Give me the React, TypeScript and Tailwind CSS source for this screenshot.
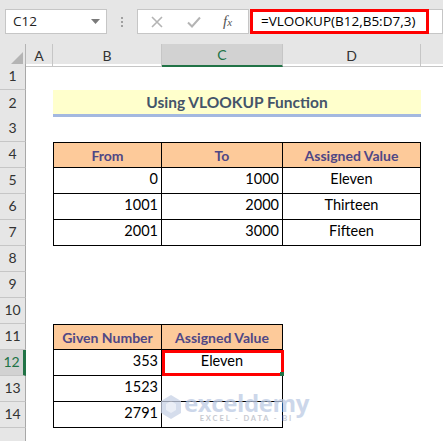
import React from "react";

const cols = "grid grid-cols-[26px_27px_109px_121px_138px_1fr]";
const font = "font-['Lato','Open_Sans',sans-serif]";

function RowHead({ n, selected }: { n?: number; selected?: boolean }) {
  return (
    <div
      className={
        selected
          ? "flex items-end justify-center pb-[3px] bg-[#d2d2d2] text-[#217346] border-b border-[#c6c6c6] border-r-[3px] border-r-[#217346] text-[14px]"
          : "flex items-end justify-center pb-[3px] bg-[#e6e6e6] text-[#333] border-b border-[#c6c6c6] border-r border-r-[#a8a8a8] text-[14px]"
      }
    >
      {n}
    </div>
  );
}

function Row({
  n,
  selected,
  children,
}: {
  n?: number;
  selected?: boolean;
  children?: React.ReactNode;
}) {
  return (
    <div className={`${cols} h-[26px]`}>
      <RowHead n={n} selected={selected} />
      {children}
    </div>
  );
}

const head =
  "flex items-center justify-center pt-[1px] bg-[#fdca9a] font-bold text-[#4f4785] text-[14px] border-t border-b border-r border-black";
const num =
  "flex items-end justify-end pr-[3px] pb-[3px] text-[14.5px] text-black border-b border-r border-black";
const txt =
  "flex items-end justify-center pb-[3px] text-[14.5px] text-black border-b border-r border-black";

const rates = [
  { from: 0, to: 1000, value: "Eleven" },
  { from: 1001, to: 2000, value: "Thirteen" },
  { from: 2001, to: 3000, value: "Fifteen" },
];

const given = [
  { n: 353, value: "Eleven" },
  { n: 1523, value: "" },
  { n: 2791, value: "" },
];

export default function App() {
  return (
    <div className={`w-[443px] h-[441px] overflow-hidden bg-white ${font}`}>
      {/* Formula bar */}
      <div className="h-[44px] bg-[#e6e6e6] flex items-start pt-[9px] pl-[5px]">
        <div className="w-[102px] h-[25px] bg-white border border-[#c6c6c6] flex items-center justify-between pl-[7px] pr-[6px] font-['Open_Sans',sans-serif] text-[13.5px] text-[#222]">
          <span>C12</span>
          <svg width="9" height="5" viewBox="0 0 9 5">
            <path d="M0 0h9L4.5 5z" fill="#7a7a7a" />
          </svg>
        </div>
        <div className="w-[30px] h-[25px] flex flex-col items-center justify-center gap-[2px]">
          <span className="w-[2px] h-[2px] bg-[#a0a0a0]" />
          <span className="w-[2px] h-[2px] bg-[#a0a0a0]" />
          <span className="w-[2px] h-[2px] bg-[#a0a0a0]" />
        </div>
        <div className="w-[112px] h-[25px] bg-white border border-[#c6c6c6] flex items-center">
          <svg className="ml-[13px]" width="12" height="12" viewBox="0 0 12 12">
            <path d="M1 1l10 10M11 1L1 11" stroke="#b4b4b4" strokeWidth="1.6" />
          </svg>
          <svg className="ml-[24px]" width="14" height="12" viewBox="0 0 14 12">
            <path d="M1 6.5l4 4L13 1.5" stroke="#b4b4b4" strokeWidth="2" fill="none" />
          </svg>
          <span className="ml-[22px] italic font-['Liberation_Serif',serif] text-[15px] text-[#555]">
            f<span className="text-[11px]">x</span>
          </span>
        </div>
        <div className="ml-[1px] flex-1 h-[25px] bg-white border border-[#c6c6c6]">
          <div className="w-[179px] h-[25px] -mt-px -ml-px border-[3px] border-[#ff0000] flex items-center pl-[8px] font-['Open_Sans',sans-serif] text-[13.5px] text-black">
            =VLOOKUP(B12,B5:D7,3)
          </div>
        </div>
      </div>

      {/* Column headers */}
      <div className={`${cols} h-[20px] bg-[#e6e6e6] text-[14px] text-[#333]`}>
        <div className="border-r border-b border-[#b4b4b4] flex items-end justify-end p-[2px]">
          <svg width="12" height="12" viewBox="0 0 12 12">
            <path d="M12 0v12H0z" fill="#b4b4b4" />
          </svg>
        </div>
        <div className="border-r border-b border-[#c6c6c6] flex items-center justify-center">A</div>
        <div className="border-r border-b border-[#c6c6c6] flex items-center justify-center">B</div>
        <div className="bg-[#d2d2d2] border-r border-[#c6c6c6] border-b-2 border-b-[#217346] flex items-center justify-center text-[#217346]">
          C
        </div>
        <div className="border-r border-b border-[#c6c6c6] flex items-center justify-center">D</div>
        <div className="border-b border-[#c6c6c6]" />
      </div>

      {/* Sheet body */}
      <div className="relative">
        <Row n={1} />
        <Row n={2}>
          <div />
          <div className="col-span-3 bg-[#ffffcc] border-b-[3px] border-[#a3b8e0] flex items-center justify-center pt-[1px] font-bold text-[15.5px] text-[#44546a]">
            Using VLOOKUP Function
          </div>
        </Row>
        <Row n={3} />
        <Row n={4}>
          <div />
          <div className={`${head} border-l`}>From</div>
          <div className={head}>To</div>
          <div className={head}>Assigned Value</div>
        </Row>
        {rates.map((r, i) => (
          <Row key={r.from} n={5 + i}>
            <div />
            <div className={`${num} border-l`}>{r.from}</div>
            <div className={num}>{r.to}</div>
            <div className={txt}>{r.value}</div>
          </Row>
        ))}
        <Row n={8} />
        <Row n={9} />
        <Row n={10} />
        <Row n={11}>
          <div />
          <div className={`${head} border-l`}>Given Number</div>
          <div className={head}>Assigned Value</div>
        </Row>
        {given.map((g, i) => (
          <Row key={g.n} n={12 + i} selected={i === 0}>
            <div />
            <div className={`${num} border-l`}>{g.n}</div>
            <div className={`${txt} relative`}>
              {g.value}
              {i === 0 && (
                <div className="absolute left-0 top-0 -right-[2px] -bottom-[1px] border-[3px] border-[#ff0000]">
                  <span className="absolute -right-[3px] -bottom-[3px] w-[4px] h-[4px] bg-[#217346]" />
                </div>
              )}
            </div>
          </Row>
        ))}
        <Row />

        {/* Watermark */}
        <div className="absolute left-[159px] top-[326px] flex items-center gap-[1px] opacity-75 pointer-events-none">
          <svg width="24" height="26" viewBox="0 0 24 26">
            <path d="M12 1l10 6v12l-10 6-10-6V7z" fill="#c8d2e6" />
            <path d="M12 7l5 3v6l-5 3-5-3v-6z" fill="#e4e9f3" />
          </svg>
          <div className="flex flex-col items-center">
            <span className="font-['Open_Sans',sans-serif] font-bold text-[24px] leading-[25px] text-[#bccae4] tracking-[-0.4px]">
              exceldemy
            </span>
            <span className="text-[7.5px] leading-[8px] font-bold tracking-[1.9px] text-[#b4b8c2]">
              EXCEL - DATA - BI
            </span>
          </div>
        </div>
      </div>
    </div>
  );
}
